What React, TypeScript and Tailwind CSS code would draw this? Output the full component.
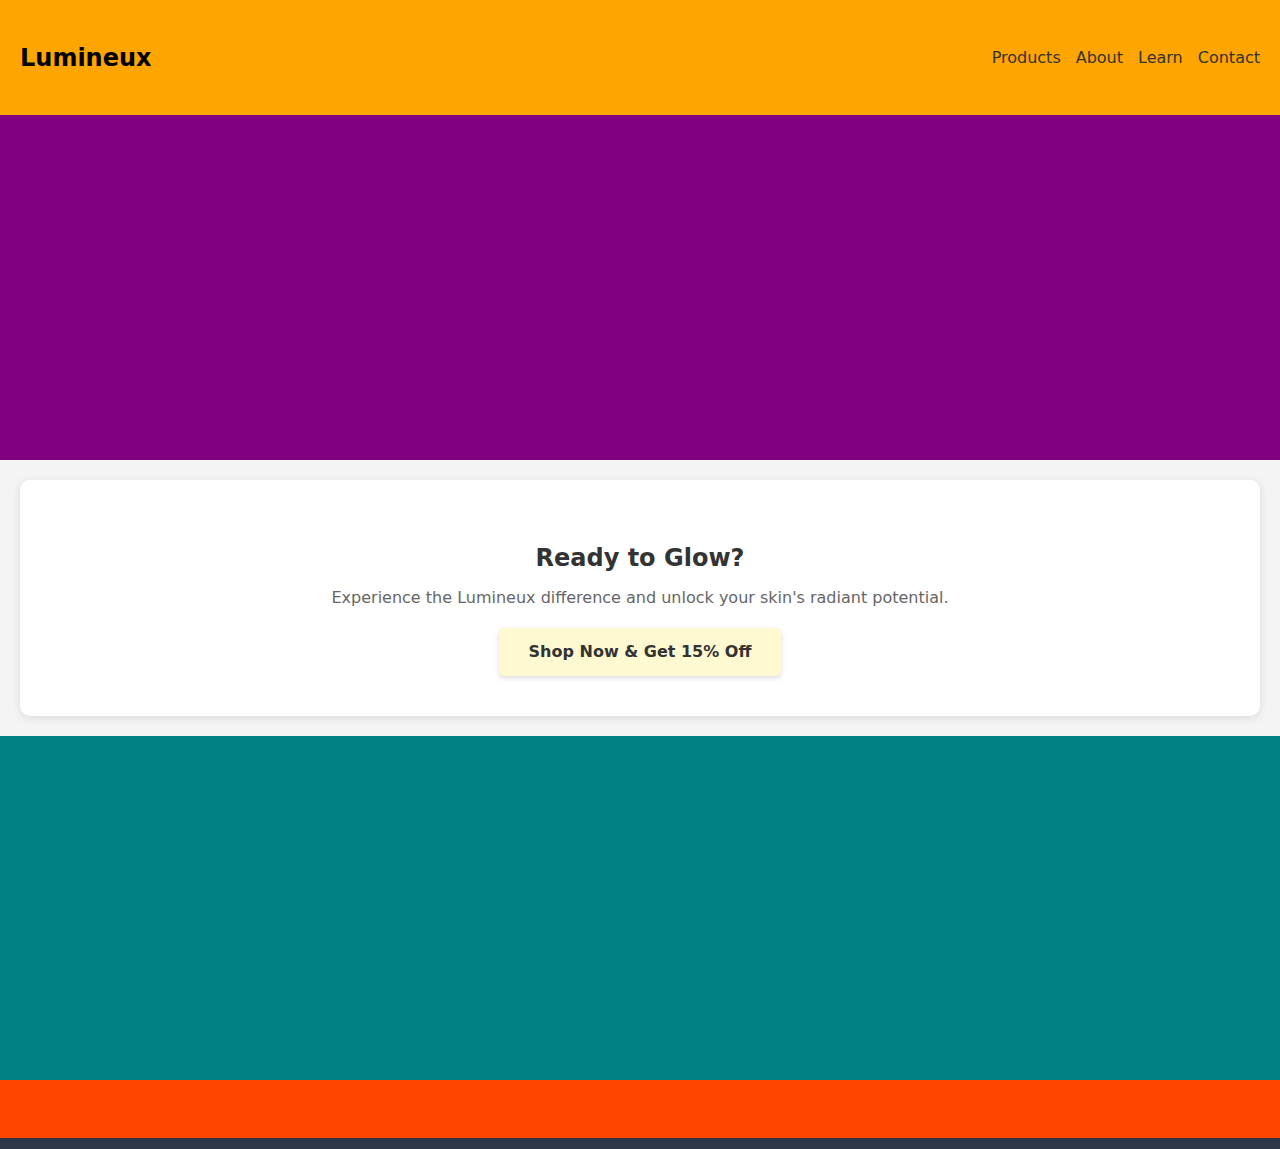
import React from 'react';

const links = ['Products', 'About', 'Learn', 'Contact'];

export default function App() {
  return (
    <div className="min-h-screen bg-[#f4f4f4] font-['DejaVu_Sans',sans-serif]">
      {/* Header */}
      <header className="h-[115px] bg-[#ffa500] px-5 flex items-center justify-between">
        <h1 className="text-2xl font-bold text-black leading-9">Lumineux</h1>
        <nav className="flex gap-[15px]">
          {links.map(l => (
            <a key={l} href="#" className="text-base text-[#333] leading-6">{l}</a>
          ))}
        </nav>
      </header>

      {/* Hero */}
      <section className="h-[345px] bg-[#800080]" />

      {/* CTA */}
      <section className="p-5">
        <div className="bg-white rounded-[10px] shadow-[0_2px_10px_rgba(0,0,0,0.1)] pt-[60px] pb-10 flex flex-col items-center text-center">
          <h2 className="text-2xl font-bold text-[#333] leading-9">Ready to Glow?</h2>
          <p className="mt-[10px] text-base text-[#666] leading-6">
            Experience the Lumineux difference and unlock your skin's radiant potential.
          </p>
          <button className="mt-[18px] h-12 px-[30px] rounded-[5px] bg-[#fef9d1] text-[#333] font-bold text-base shadow-[0_2px_5px_rgba(0,0,0,0.15)]">
            Shop Now &amp; Get 15% Off
          </button>
        </div>
      </section>

      {/* Features */}
      <section className="h-[344px] bg-[#008080]" />

      {/* Banner */}
      <section className="h-[58px] bg-[#ff4500]" />

      {/* Footer */}
      <footer className="h-[200px] bg-[#2d3748]" />
    </div>
  );
}
